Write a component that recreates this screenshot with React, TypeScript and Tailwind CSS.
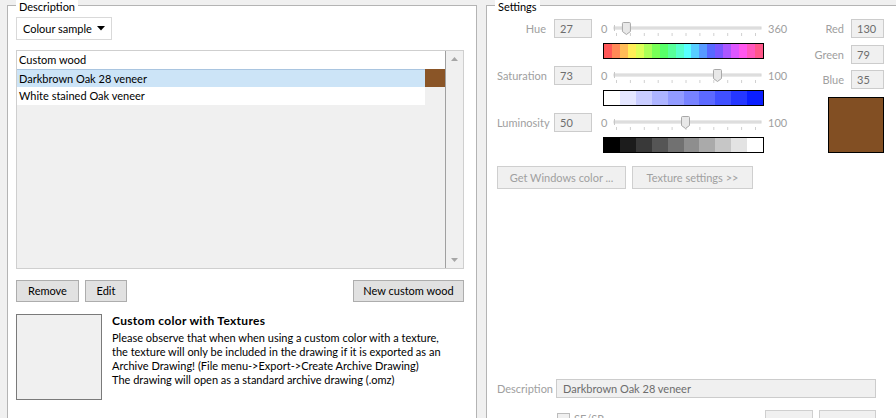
import React from "react";

const hueColors = Array.from({ length: 20 }, (_, i) => `hsl(${i * 18}, 100%, 67%)`);
const satColors = Array.from({ length: 10 }, (_, i) => {
  const t = i / 9;
  const r = Math.round(255 - (255 - 10) * t);
  const g = Math.round(255 - (255 - 30) * t);
  return `rgb(${r}, ${g}, 255)`;
});
const lumColors = Array.from({ length: 10 }, (_, i) => {
  const v = Math.round((255 * i) / 9);
  return `rgb(${v}, ${v}, ${v})`;
});

function Slider({ t }: { t: number }) {
  const cx = 9 + t * 139;
  return (
    <svg width={158} height={19} className="block shrink-0">
      <rect x={7} y={8} width={147} height={2} fill="#e7e7e7" stroke="#d4d4d4" strokeWidth={1} />
      <line x1={7.5} y1={6} x2={7.5} y2={12} stroke="#c8c8c8" />
      {Array.from({ length: 11 }, (_, i) => (
        <line key={i} x1={9.5 + i * 13.9} y1={14} x2={9.5 + i * 13.9} y2={17} stroke="#d0d0d0" />
      ))}
      <path
        d={`M${cx - 3} 3.5 h6 a1 1 0 0 1 1 1 v8 l-4 3 l-4 -3 v-8 a1 1 0 0 1 1 -1 z`}
        fill="#e8e8e8"
        stroke="#a8a8a8"
      />
    </svg>
  );
}

function Bar({ colors }: { colors: string[] }) {
  return (
    <div className="ml-[106px] mt-[5px] flex h-[16px] w-[161px] border border-black">
      {colors.map((c, i) => (
        <div key={i} className="h-full flex-1" style={{ backgroundColor: c }} />
      ))}
    </div>
  );
}

function HslBlock({ label, value, max, t, colors, first }: { label: string; value: string; max: string; t: number; colors: string[]; first?: boolean }) {
  return (
    <div className={first ? "" : "mt-[7px]"}>
      <div className="flex h-[19px] items-center">
        <span className="w-[49px] shrink-0 whitespace-nowrap text-right text-[#a0a0a0]">{label}</span>
        <div className="ml-[8px] flex h-[19px] w-[38px] shrink-0 items-center border border-[#cccccc] bg-[#f0f0f0] pl-[5px] text-[#6d6d6d]">
          {value}
        </div>
        <span className="ml-[9px] w-[6px] text-[#a0a0a0]">0</span>
        <Slider t={t} />
        <span className="ml-[3px] text-[#a0a0a0]">{max}</span>
      </div>
      <Bar colors={colors} />
    </div>
  );
}

function RgbRow({ label, value, className }: { label: string; value: string; className?: string }) {
  return (
    <div className={`flex h-[19px] items-center ${className ?? ""}`}>
      <span className="text-[#a0a0a0]">{label}</span>
      <div className="ml-[7px] flex h-[19px] w-[33px] items-center border border-[#cccccc] bg-[#f0f0f0] pl-[5px] text-[#6d6d6d]">
        {value}
      </div>
    </div>
  );
}

function GroupBox({ title, className, children }: { title: string; className: string; children: React.ReactNode }) {
  return (
    <div className={`relative shrink-0 border border-[#b4b4b4] bg-white ${className}`}>
      <span className="absolute left-[8px] top-[-6px] bg-white px-[3px] leading-[14px]">{title}</span>
      {children}
    </div>
  );
}

export default function App() {
  return (
    <div className="h-[418px] w-[896px] overflow-hidden bg-[#f0f0f0] font-['Lato',sans-serif] text-[11px] leading-[14px] text-black">
      <div className="flex gap-[9px] pl-[7px] pt-[5px]">
        <GroupBox title="Description" className="h-[440px] w-[470px] pl-[8px] pt-[11px]">
          <div className="flex h-[23px] w-[96px] items-center border border-[#d9d9d9] bg-white pl-[6px]">
            <span className="whitespace-nowrap">Colour sample</span>
            <svg width={8} height={5} className="ml-auto mr-[6px] shrink-0">
              <path d="M0 0 H8 L4 4.5 Z" fill="#000" />
            </svg>
          </div>

          <div className="mt-[10px] flex h-[219px] w-[448px] border border-[#cfcfcf] bg-[#f0f0f0]">
            <div className="flex-1 border-r border-[#a0a0a0]">
              <div className="flex h-[18px] items-center bg-white pl-[2px]">Custom wood</div>
              <div className="flex h-[18px]">
                <div className="flex flex-1 items-center border-t border-[#a9c5e0] bg-[#cce4f7] pl-[2px]">
                  Darkbrown Oak 28 veneer
                </div>
                <div className="w-[20px] bg-[#8a5527]" />
              </div>
              <div className="flex h-[18px]">
                <div className="flex flex-1 items-center bg-white pl-[2px]">White stained Oak veneer</div>
                <div className="w-[20px]" />
              </div>
            </div>
            <div className="flex w-[17px] flex-col items-center justify-between py-[6px]">
              <svg width={7} height={4}>
                <path d="M0 4 L3.5 0 L7 4 Z" fill="#a6a6a6" />
              </svg>
              <svg width={7} height={4}>
                <path d="M0 0 L3.5 4 L7 0 Z" fill="#a6a6a6" />
              </svg>
            </div>
          </div>

          <div className="mt-[11px] flex w-[448px] items-center">
            <button className="h-[22px] w-[63px] border border-[#adadad] bg-[#e1e1e1]">Remove</button>
            <button className="ml-[6px] h-[22px] w-[42px] border border-[#adadad] bg-[#e1e1e1]">Edit</button>
            <button className="ml-auto h-[22px] w-[111px] border border-[#adadad] bg-[#e1e1e1]">New custom wood</button>
          </div>

          <div className="mt-[12px] flex">
            <div className="h-[86px] w-[86px] shrink-0 border border-[#7a7a7a] bg-[#f0f0f0]" />
            <div className="ml-[10px] whitespace-nowrap">
              <div className="text-[12px] font-bold tracking-[0.3px]">Custom color with Textures</div>
              <p className="mt-[3px]">
                Please observe that when when using a custom color with a texture,
                <br />
                the texture will only be included in the drawing if it is exported as an
                <br />
                Archive Drawing! (File menu-&gt;Export-&gt;Create Archive Drawing)
                <br />
                The drawing will open as a standard archive drawing (.omz)
              </p>
            </div>
          </div>
        </GroupBox>

        <GroupBox title="Settings" className="h-[440px] w-[420px] pl-[10px] pt-[13px]">
          <div className="flex">
            <div className="w-[303px]">
              <HslBlock first label="Hue" value="27" max="360" t={27 / 360} colors={hueColors} />
              <HslBlock label="Saturation" value="73" max="100" t={0.73} colors={satColors} />
              <HslBlock label="Luminosity" value="50" max="100" t={0.5} colors={lumColors} />
            </div>
            <div className="flex w-[84px] flex-col items-end">
              <RgbRow label="Red" value="130" />
              <RgbRow label="Green" value="79" className="mt-[7px]" />
              <RgbRow label="Blue" value="35" className="mt-[6px]" />
              <div className="mt-[8px] h-[56px] w-[56px] border border-black bg-[#824f23]" />
            </div>
          </div>

          <div className="mt-[13px] flex">
            <button className="h-[23px] w-[129px] whitespace-nowrap border border-[#cfcfcf] bg-[#f0f0f0] text-[#a0a0a0]">Get Windows color ...</button>
            <button className="ml-[6px] h-[23px] w-[121px] whitespace-nowrap border border-[#cfcfcf] bg-[#f0f0f0] text-[#a0a0a0]">Texture settings &gt;&gt;</button>
          </div>

          <div className="mt-[190px] flex h-[19px] items-center">
            <span className="w-[59px] shrink-0 whitespace-nowrap text-[#a0a0a0]">Description</span>
            <div className="flex h-[19px] w-[320px] items-center border border-[#cccccc] bg-[#f0f0f0] pl-[6px] text-[#6d6d6d]">
              Darkbrown Oak 28 veneer
            </div>
          </div>

          <div className="mt-[12px] flex w-[379px] items-start">
            <div className="ml-[60px] mt-[2px] flex items-center">
              <div className="h-[13px] w-[13px] border border-[#bcbcbc] bg-[#f0f0f0]" />
              <span className="ml-[4px] text-[#a0a0a0]">SE/SR</span>
            </div>
            <div className="ml-auto h-[23px] w-[48px] border border-[#cfcfcf] bg-[#f0f0f0]" />
            <div className="ml-[6px] h-[23px] w-[57px] border border-[#cfcfcf] bg-[#f0f0f0]" />
          </div>
        </GroupBox>
      </div>
    </div>
  );
}
